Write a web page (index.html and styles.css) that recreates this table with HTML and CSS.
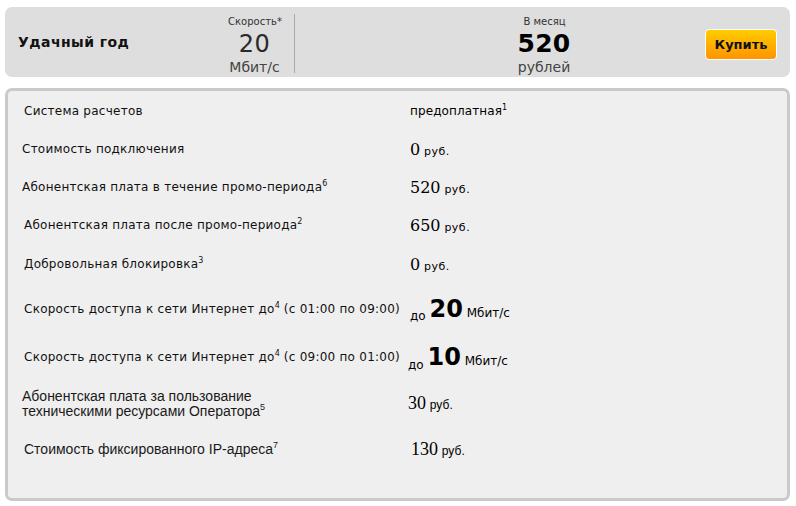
FILE: index.html
```html
<!DOCTYPE html>
<html lang="ru">
<head>
<meta charset="utf-8">
<title>Удачный год</title>
<link rel="stylesheet" href="styles.css">
</head>
<body>
<div class="page">
  <header class="tariff">
    <div class="tariff__name">Удачный год</div>
    <div class="stat stat--speed">
      <div class="stat__cap">Скорость*</div>
      <div class="stat__num">20</div>
      <div class="stat__unit">Мбит/с</div>
    </div>
    <div class="stat stat--price">
      <div class="stat__cap">В месяц</div>
      <div class="stat__num stat__num--bold">520</div>
      <div class="stat__unit">рублей</div>
    </div>
    <div class="tariff__spacer"></div>
    <button class="buy">Купить</button>
  </header>

  <section class="card">
    <div class="row row--r1">
      <div class="row__label row__label--in">Система расчетов</div>
      <div class="row__value"><span class="txt">предоплатная<sup>1</sup></span></div>
    </div>
    <div class="row row--r2">
      <div class="row__label">Стоимость подключения</div>
      <div class="row__value"><span class="num">0</span> <span class="unit">руб.</span></div>
    </div>
    <div class="row row--r3">
      <div class="row__label">Абонентская плата в течение промо-периода<sup>6</sup></div>
      <div class="row__value"><span class="num">520</span> <span class="unit">руб.</span></div>
    </div>
    <div class="row row--r4">
      <div class="row__label row__label--in">Абонентская плата после промо-периода<sup>2</sup></div>
      <div class="row__value"><span class="num">650</span> <span class="unit">руб.</span></div>
    </div>
    <div class="row row--r5">
      <div class="row__label row__label--in">Добровольная блокировка<sup>3</sup></div>
      <div class="row__value"><span class="num">0</span> <span class="unit">руб.</span></div>
    </div>
    <div class="row row--r6">
      <div class="row__label row__label--in">Скорость доступа к сети Интернет до<sup>4</sup> (с 01:00 по 09:00)</div>
      <div class="row__value"><span class="pre">до</span> <span class="big">20</span> <span class="bunit">Мбит/с</span></div>
    </div>
    <div class="row row--r7">
      <div class="row__label row__label--in">Скорость доступа к сети Интернет до<sup>4</sup> (с 09:00 по 01:00)</div>
      <div class="row__value row__value--out"><span class="pre pre--low">до</span> <span class="big">10</span> <span class="bunit">Мбит/с</span></div>
    </div>
    <div class="row row--r8 row--alt">
      <div class="row__label">Абонентская плата за пользование<br>техническими ресурсами Оператора<sup>5</sup></div>
      <div class="row__value row__value--out"><span class="snum">30</span> <span class="sunit">руб.</span></div>
    </div>
    <div class="row row--r9 row--alt">
      <div class="row__label row__label--in">Стоимость фиксированного IP-адреса<sup>7</sup></div>
      <div class="row__value row__value--in"><span class="snum">130</span> <span class="sunit">руб.</span></div>
    </div>
  </section>
</div>
</body>
</html>
```

FILE: styles.css
```css
* { box-sizing: border-box; }
html, body { margin: 0; padding: 0; background: #fff; }
body {
  font-family: "DejaVu Sans", Verdana, sans-serif;
  color: #000;
}
.page {
  width: 796px;
  padding: 7px 6px 0 5px;
}

/* header */
.tariff {
  height: 70px;
  background: #dedede;
  border-radius: 7px;
  display: flex;
  align-items: flex-start;
  padding: 0 13px 0 13px;
}
.tariff__name {
  flex: 0 0 197px;
  font-weight: bold;
  font-size: 14px;
  letter-spacing: 0.45px;
  margin-top: 27px;
  color: #111;
}
.stat {
  display: flex;
  flex-direction: column;
  align-items: center;
  color: #222;
  margin-top: 7px;
}
.stat--speed {
  width: 80px;
  height: 59px;
  border-right: 1px solid #a9a9a9;
}
.stat--price {
  width: 120px;
  margin-left: 189px;
}
.stat__cap {
  font-size: 10px;
  line-height: 15px;
  color: #333;
  padding-left: 1px;
}
.stat__num {
  font-size: 24px;
  line-height: 30px;
  font-weight: normal;
  letter-spacing: 0.5px;
  color: #2a2a2a;
}
.stat__num--bold {
  font-weight: bold;
  color: #000;
  font-size: 25px;
  letter-spacing: 0.3px;
}
.stat__unit {
  font-size: 14px;
  line-height: 16px;
  color: #444;
}
.tariff__spacer { flex: 1; }
.buy {
  width: 72px;
  height: 31px;
  border: 1px solid #fff;
  border-radius: 4px;
  background: linear-gradient(#ffcc00, #ff9400);
  font-family: "DejaVu Sans", Verdana, sans-serif;
  font-weight: bold;
  font-size: 13px;
  color: #111;
  padding: 0;
  margin-top: 22px;
}

/* card */
.card {
  margin-top: 11px;
  height: 413px;
  background: #efefef;
  border: 3px solid #cacaca;
  border-radius: 7px;
  padding: 1px 0 0 14px;
}
.row {
  display: flex;
  align-items: center;
  height: 38px;
  font-size: 12px;
}
.row--r5 { height: 40px; }
.row--r6 { height: 50px; }
.row--r7 { height: 46px; }
.row--r8 { height: 47px; }
.row--r9 { height: 44px; }
.row__label {
  flex: 0 0 388px;
  line-height: 14px;
  color: #111;
  letter-spacing: 0.25px;
}
.row__label--in { padding-left: 2px; }
.row__value {
  display: block;
  white-space: nowrap;
}
.row__value--out { margin-left: -2px; }
.row__value--in { margin-left: 1px; }
sup {
  font-size: 8px;
  vertical-align: 5px;
  line-height: 0;
  letter-spacing: 0;
}
.txt { font-size: 12px; letter-spacing: 0.1px; }
.num {
  font-family: "DejaVu Serif", Georgia, serif;
  font-size: 16px;
}
.unit { font-size: 11px; letter-spacing: 0.5px; }
.pre { font-size: 12px; position: relative; top: 3px; }
.pre--low { top: 4px; }
.big {
  font-size: 24px;
  font-weight: bold;
}
.bunit { font-size: 12px; }

.row--alt .row__label {
  font-family: "Liberation Sans Narrow", "Liberation Sans", Arial, sans-serif;
  font-size: 14px;
  line-height: 15px;
  letter-spacing: 0;
  color: #1a1a1a;
}
.row--alt sup { font-size: 9px; vertical-align: 6px; }
.snum {
  font-family: "Liberation Serif", "Times New Roman", serif;
  font-size: 18px;
}
.sunit {
  font-family: "Liberation Sans Narrow", "Liberation Sans", Arial, sans-serif;
  font-size: 12px;
}
```
